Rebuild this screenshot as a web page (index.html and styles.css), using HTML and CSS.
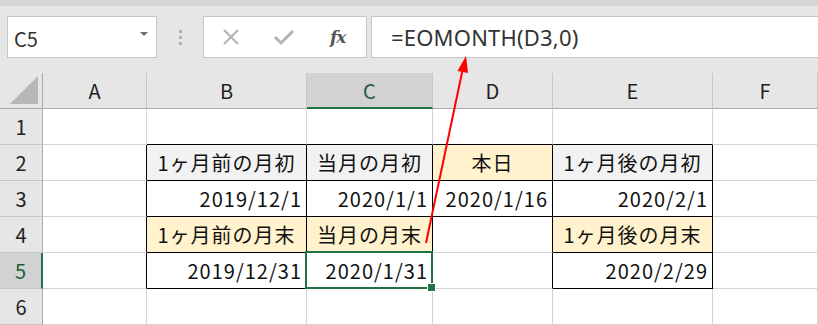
FILE: index.html
```html
<!DOCTYPE html>
<html lang="ja">
<head>
  <meta charset="UTF-8" />
  <title>EOMONTH</title>
  <link rel="stylesheet" href="styles.css">
</head>
<body>

<div id="topstrip"></div>

<div id="fbar">
  <div id="namebox">
    <span>C5</span>
    <svg class="caret" width="8" height="5" viewBox="0 0 8 5"><polygon points="0,0 8,0 4,4" fill="#707070"/></svg>
  </div>
  <div id="grip"><i></i><i></i><i></i></div>
  <div id="btns">
    <svg class="cancel" width="20" height="20" viewBox="0 0 20 20"><path d="M3 3 L17 17 M17 3 L3 17" stroke="#b4b4b4" stroke-width="2.2" fill="none"/></svg>
    <svg class="enter" width="22" height="20" viewBox="0 0 22 20"><path d="M2 10 L8 16 L20 4" stroke="#b4b4b4" stroke-width="3" fill="none"/></svg>
    <span class="fx">fx</span>
  </div>
  <div id="formula">=EOMONTH(D3,0)</div>
</div>

<div id="sheet">
  <div class="corner"><svg width="28" height="28" viewBox="0 0 28 28"><polygon points="28,0 28,28 0,28" fill="#b7b7b7"/></svg></div>
  <div class="ch">A</div>
  <div class="ch">B</div>
  <div class="ch sel">C</div>
  <div class="ch">D</div>
  <div class="ch">E</div>
  <div class="ch">F</div>

  <div class="rh">1</div>
  <div class="c"></div>
  <div class="c bb"></div>
  <div class="c bb"></div>
  <div class="c bb"></div>
  <div class="c bb"></div>
  <div class="c"></div>

  <div class="rh">2</div>
  <div class="c br"></div>
  <div class="c box gray mid">1ヶ月前の月初</div>
  <div class="c box gray mid">当月の月初</div>
  <div class="c box yel mid">本日</div>
  <div class="c box gray mid">1ヶ月後の月初</div>
  <div class="c"></div>

  <div class="rh">3</div>
  <div class="c br"></div>
  <div class="c box num">2019/12/1</div>
  <div class="c box num">2020/1/1</div>
  <div class="c box num">2020/1/16</div>
  <div class="c box num">2020/2/1</div>
  <div class="c"></div>

  <div class="rh">4</div>
  <div class="c br"></div>
  <div class="c box yel mid">1ヶ月前の月末</div>
  <div class="c box yel mid">当月の月末</div>
  <div class="c br"></div>
  <div class="c box yel mid">1ヶ月後の月末</div>
  <div class="c"></div>

  <div class="rh rsel">5</div>
  <div class="c br"></div>
  <div class="c box num">2019/12/31</div>
  <div class="c box num active">2020/1/31<div class="selbox"></div><div class="handle"></div></div>
  <div class="c br"></div>
  <div class="c box num">2020/2/29</div>
  <div class="c"></div>

  <div class="rh">6</div>
  <div class="c"></div>
  <div class="c"></div>
  <div class="c"></div>
  <div class="c"></div>
  <div class="c"></div>
  <div class="c"></div>
</div>

<!-- pointer from C4 up to the formula -->
<svg id="arrow" width="818" height="325" viewBox="0 0 818 325">
  <line x1="426" y1="243" x2="463" y2="68" stroke="#ff0000" stroke-width="2"/>
  <polygon points="466,56 468,73 457.5,71" fill="#ff0000"/>
</svg>

</body>
</html>
```

FILE: styles.css
```css
body {
  margin: 0;
  background: #e6e6e6;
  font-family: "Noto Sans CJK JP", "Noto Sans", sans-serif;
  color: #222;
  width: 818px;
  height: 325px;
  overflow: hidden;
  position: relative;
}
#topstrip {
  height: 6px;
  background: #d6d6d6;
}
#fbar {
  display: flex;
  align-items: stretch;
  height: 42px;
  margin-top: 10px;
  margin-bottom: 15px;
  padding-left: 7px;
}
#namebox {
  width: 150px;
  box-sizing: border-box;
  background: #fff;
  border: 1px solid #c6c6c6;
  display: flex;
  align-items: center;
  justify-content: space-between;
  padding: 0 8px 0 6px;
  font-size: 20px;
  color: #333;
}
#namebox span {
  margin-top: 3px;
}
#namebox .caret {
  margin-bottom: 6px;
}
#grip {
  width: 46px;
  display: flex;
  flex-direction: column;
  align-items: center;
  justify-content: center;
  gap: 3px;
}
#grip i {
  display: block;
  width: 3px;
  height: 3px;
  background: #b0b0b0;
}
#btns {
  width: 164px;
  box-sizing: border-box;
  background: #fff;
  border: 1px solid #c6c6c6;
  display: flex;
  align-items: center;
  padding-left: 17px;
}
#btns .enter {
  margin-left: 32px;
}
#btns .fx {
  margin-left: 35px;
  font-family: "DejaVu Serif", "Liberation Serif", serif;
  font-style: italic;
  font-weight: bold;
  font-size: 17px;
  color: #555;
  letter-spacing: -1px;
}
#formula {
  flex: 1;
  margin-left: 4px;
  background: #fff;
  border: 1px solid #c6c6c6;
  border-right: none;
  display: flex;
  align-items: center;
  padding-left: 19px;
  font-family: "Noto Sans", "Noto Sans CJK JP", sans-serif;
  font-size: 22px;
  letter-spacing: 0.2px;
  color: #333;
}

#sheet {
  display: grid;
  grid-template-columns: 43px 104px 160px 126px 120px 160px 105px;
  grid-template-rows: repeat(7, 36px);
  font-size: 20px;
}
#sheet > div {
  box-sizing: border-box;
}
.corner {
  background: #e6e6e6;
  border-right: 1px solid #ababab;
  border-bottom: 1px solid #ababab;
  display: flex;
  align-items: flex-end;
  justify-content: flex-end;
  padding: 0 4px 4px 0;
}
.ch {
  background: #e6e6e6;
  border-right: 1px solid #c6c6c6;
  border-bottom: 1px solid #ababab;
  display: flex;
  align-items: center;
  justify-content: center;
  color: #222;
}
.ch.sel {
  background: #d2d2d2;
  border-bottom: 2px solid #217346;
  color: #1d5e3c;
}
.rh {
  background: #e6e6e6;
  border-right: 1px solid #ababab;
  border-bottom: 1px solid #c6c6c6;
  display: flex;
  align-items: center;
  justify-content: center;
  color: #222;
}
.rh.rsel {
  background: #d2d2d2;
  border-right: 2px solid #217346;
  color: #1d5e3c;
}
.c {
  background: #fff;
  border-right: 1px solid #d4d4d4;
  border-bottom: 1px solid #d4d4d4;
  display: flex;
  align-items: center;
  white-space: nowrap;
  color: #111;
}
.c.bb {
  border-bottom-color: #000;
}
.c.br {
  border-right-color: #000;
}
.c.box {
  border-right-color: #000;
  border-bottom-color: #000;
}
.gray {
  background: #f2f2f2;
}
.c.yel {
  background: #fff2cc;
}
.mid {
  justify-content: center;
  letter-spacing: 1px;
}
.num {
  justify-content: flex-end;
  padding-right: 4px;
  letter-spacing: 1px;
}
.active {
  position: relative;
}
.selbox {
  position: absolute;
  top: -2px;
  left: -2px;
  right: -1px;
  bottom: -1px;
  border: 2px solid #217346;
}
.handle {
  position: absolute;
  right: -4px;
  bottom: -4px;
  width: 7px;
  height: 7px;
  background: #217346;
  border: 1px solid #fff;
}
#arrow {
  position: absolute;
  left: 0;
  top: 0;
  pointer-events: none;
}
```
